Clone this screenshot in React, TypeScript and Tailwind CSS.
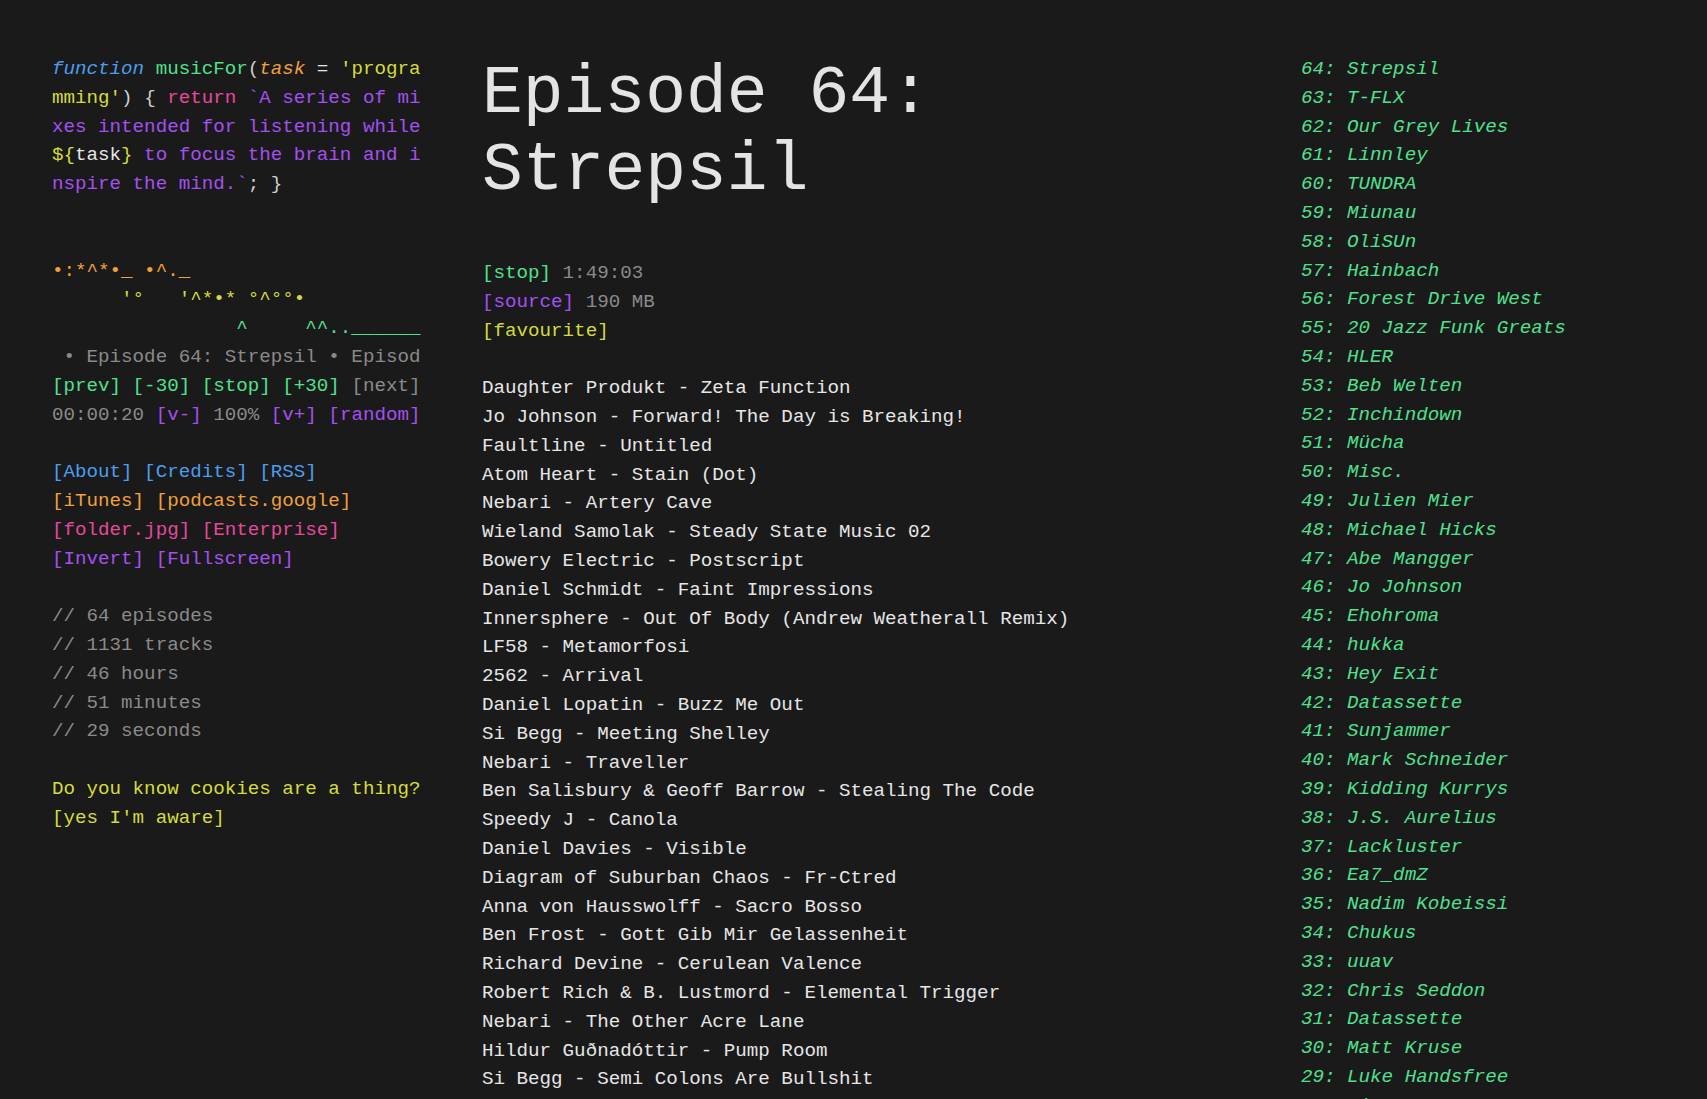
const tracks = [
  "Daughter Produkt - Zeta Function",
  "Jo Johnson - Forward! The Day is Breaking!",
  "Faultline - Untitled",
  "Atom Heart - Stain (Dot)",
  "Nebari - Artery Cave",
  "Wieland Samolak - Steady State Music 02",
  "Bowery Electric - Postscript",
  "Daniel Schmidt - Faint Impressions",
  "Innersphere - Out Of Body (Andrew Weatherall Remix)",
  "LF58 - Metamorfosi",
  "2562 - Arrival",
  "Daniel Lopatin - Buzz Me Out",
  "Si Begg - Meeting Shelley",
  "Nebari - Traveller",
  "Ben Salisbury & Geoff Barrow - Stealing The Code",
  "Speedy J - Canola",
  "Daniel Davies - Visible",
  "Diagram of Suburban Chaos - Fr-Ctred",
  "Anna von Hausswolff - Sacro Bosso",
  "Ben Frost - Gott Gib Mir Gelassenheit",
  "Richard Devine - Cerulean Valence",
  "Robert Rich & B. Lustmord - Elemental Trigger",
  "Nebari - The Other Acre Lane",
  "Hildur Guðnadóttir - Pump Room",
  "Si Begg - Semi Colons Are Bullshit",
  "Daughter Produkt - Sunsoaked Tanjerine 2",
];

const episodes = [
  "Strepsil",
  "T-FLX",
  "Our Grey Lives",
  "Linnley",
  "TUNDRA",
  "Miunau",
  "OliSUn",
  "Hainbach",
  "Forest Drive West",
  "20 Jazz Funk Greats",
  "HLER",
  "Beb Welten",
  "Inchindown",
  "Mücha",
  "Misc.",
  "Julien Mier",
  "Michael Hicks",
  "Abe Mangger",
  "Jo Johnson",
  "Ehohroma",
  "hukka",
  "Hey Exit",
  "Datassette",
  "Sunjammer",
  "Mark Schneider",
  "Kidding Kurrys",
  "J.S. Aurelius",
  "Lackluster",
  "Ea7_dmZ",
  "Nadim Kobeissi",
  "Chukus",
  "uuav",
  "Chris Seddon",
  "Datassette",
  "Matt Kruse",
  "Luke Handsfree",
  "Big War",
];

export default function App() {
  return (
    <div className="h-[1099px] overflow-hidden bg-[#1a1a1a] font-['Liberation_Mono',monospace] text-[19.2px] leading-[28.8px] text-[#e6e6e6]">
      <div className="flex pt-[55px] pl-[52px]">
        <Sidebar />
        <Episode />
        <EpisodeList />
      </div>
    </div>
  );
}

const Sidebar = () => {
  return (
    <aside className="w-[370px] shrink-0 whitespace-pre">
      <div className="mb-[57.6px]">
        <div>
          <span className="italic text-[#4a9eef]">function</span>{" "}
          <span className="text-[#50e08e]">musicFor</span>
          <span className="text-[#cfcfcf]">(</span>
          <span className="italic text-[#f0a03c]">task</span> ={" "}
          <span className="text-[#d4dc3a]">'progra</span>
        </div>
        <div>
          <span className="text-[#d4dc3a]">mming'</span>
          <span className="text-[#cfcfcf]">) {"{"} </span>
          <span className="text-[#e6489c]">return</span>{" "}
          <span className="text-[#a450f0]">`A series of mi</span>
        </div>
        <div className="text-[#a450f0]">xes intended for listening while</div>
        <div>
          <span className="text-[#d4dc3a]">{"${"}</span>
          <span>task</span>
          <span className="text-[#d4dc3a]">{"}"}</span>
          <span className="text-[#a450f0]"> to focus the brain and i</span>
        </div>
        <div>
          <span className="text-[#a450f0]">nspire the mind.`</span>
          <span className="text-[#cfcfcf]">; {"}"}</span>
        </div>
      </div>

      <div className="text-[#f0a03c]">{"•:*^*•_ •^._"}</div>
      <div className="text-[#d4dc3a]">{"      '°   '^*•* °^°°•"}</div>
      <div className="text-[#50e08e]">{"                ^     ^^..______"}</div>
      <div className="overflow-hidden text-[#8a8a8a]">
        {" • Episode 64: Strepsil • Episod"}
      </div>
      <div>
        <span className="text-[#50e08e]">[prev] [-30] [stop] [+30]</span>{" "}
        <span className="text-[#8a8a8a]">[next]</span>
      </div>
      <div className="mb-[28.8px]">
        <span className="text-[#8a8a8a]">00:00:20</span>{" "}
        <span className="text-[#a450f0]">[v-]</span>{" "}
        <span className="text-[#8a8a8a]">100%</span>{" "}
        <span className="text-[#a450f0]">[v+] [random]</span>
      </div>

      <div className="mb-[28.8px]">
        <div className="text-[#4a9eef]">[About] [Credits] [RSS]</div>
        <div className="text-[#f0a03c]">[iTunes] [podcasts.google]</div>
        <div className="text-[#e6489c]">[folder.jpg] [Enterprise]</div>
        <div className="text-[#a450f0]">[Invert] [Fullscreen]</div>
      </div>

      <div className="mb-[28.8px] text-[#8a8a8a]">
        <div>// 64 episodes</div>
        <div>// 1131 tracks</div>
        <div>// 46 hours</div>
        <div>// 51 minutes</div>
        <div>// 29 seconds</div>
      </div>

      <div className="text-[#d4dc3a]">
        <div>Do you know cookies are a thing?</div>
        <div>[yes I'm aware]</div>
      </div>
    </aside>
  );
};

const Episode = () => {
  return (
    <main className="ml-[60px] w-[759px] shrink-0">
      <h1 className="mb-[50px] text-[68px] leading-[77px] font-light text-[#e4e4e4]">
        Episode 64:
        <br />
        Strepsil
      </h1>
      <div className="mb-[28.8px] whitespace-pre">
        <div>
          <span className="text-[#50e08e]">[stop]</span>{" "}
          <span className="text-[#8a8a8a]">1:49:03</span>
        </div>
        <div>
          <span className="text-[#a450f0]">[source]</span>{" "}
          <span className="text-[#8a8a8a]">190 MB</span>
        </div>
        <div className="text-[#d4dc3a]">[favourite]</div>
      </div>
      <ul className="whitespace-pre">
        {tracks.map((t, i) => (
          <li key={i}>{t}</li>
        ))}
      </ul>
    </main>
  );
};

const EpisodeList = () => {
  return (
    <nav className="ml-[60px] whitespace-pre italic text-[#50e08e]">
      {episodes.map((name, i) => (
        <div key={i}>
          {64 - i}: {name}
        </div>
      ))}
    </nav>
  );
};
